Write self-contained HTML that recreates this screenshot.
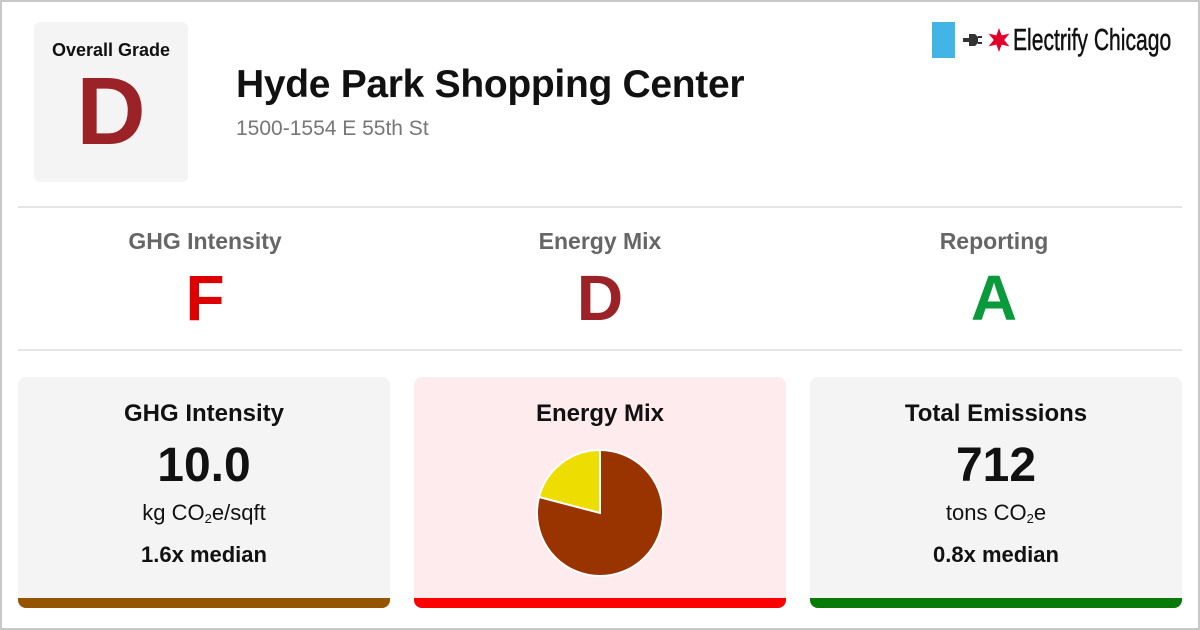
<!DOCTYPE html>
<html><head><style>
*{margin:0;padding:0;box-sizing:border-box}
body{width:1200px;height:630px;background:#fff;font-family:"Liberation Sans",Arial,sans-serif;position:relative;overflow:hidden}
.frame{position:absolute;left:0;top:0;width:1200px;height:630px;border:2px solid #c8c8c8}
.gbox{position:absolute;left:34px;top:22px;width:154px;height:160px;background:#f4f4f4;border-radius:6px;text-align:center}
.gbox .t{font-weight:bold;font-size:18px;margin-top:18px;color:#111}
.gbox .g{font-weight:bold;font-size:96px;color:#9b2226;line-height:100px;margin-top:1px}
h1{position:absolute;left:236px;top:63px;font-size:39px;font-weight:bold;color:#111;letter-spacing:-0.3px}
.addr{position:absolute;left:236px;top:117px;font-size:21px;color:#777}
.logo{position:absolute;left:932px;top:22px;height:36px;display:flex;align-items:center;white-space:nowrap}
.logo .sq{width:23px;height:36px;background:#41b6e6;flex:none}
.logo .txt{font-size:31px;color:#111;margin-left:2px;transform:scaleX(.68);transform-origin:left;white-space:nowrap;-webkit-text-stroke:0.5px #111}
.hr{position:absolute;left:18px;width:1164px;height:2px;background:#e6e6e6}
.col{position:absolute;top:228px;width:300px;text-align:center}
.col .l{font-size:23px;font-weight:bold;color:#666}
.col .v{font-size:64px;font-weight:bold;line-height:70px;margin-top:8px}
.card{position:absolute;top:377px;width:372px;height:231px;border-radius:8px;background:#f4f4f4;text-align:center;overflow:hidden}
.card .h{font-size:24px;font-weight:bold;color:#111;margin-top:23px}
.card .n{font-size:48px;font-weight:bold;color:#111;margin-top:12px;line-height:52px}
.card .u{font-size:22px;color:#111;margin-top:8px}
.card .m{font-size:22px;font-weight:bold;color:#111;margin-top:16px}
.card .bar{position:absolute;left:0;bottom:0;width:100%;height:10px}
sub{font-size:13px;vertical-align:-3px}
</style></head><body>
<div class="frame"></div>
<div class="gbox"><div class="t">Overall Grade</div><div class="g">D</div></div>
<h1>Hyde Park Shopping Center</h1>
<div class="addr">1500-1554 E 55th St</div>
<div class="logo"><div class="sq"></div>
<svg width="56" height="36" viewBox="0 0 56 36" style="flex:none"><rect x="8" y="16" width="6" height="4" fill="#333"/><path d="M14 12h6l3 3v6l-3 3h-6z" fill="#333"/><rect x="23" y="14" width="4" height="2" fill="#333"/><rect x="23" y="20" width="4" height="2" fill="#333"/><path d="M44 6l2.6 7.4 7.8-1.8-5.2 6.4 5.2 6.4-7.8-1.8L44 30l-2.6-7.4-7.8 1.8 5.2-6.4-5.2-6.4 7.8 1.8z" fill="#e4002b"/></svg>
<div class="txt">Electrify Chicago</div></div>
<div class="hr" style="top:206px"></div>
<div class="hr" style="top:349px"></div>
<div class="col" style="left:55px"><div class="l">GHG Intensity</div><div class="v" style="color:#d00">F</div></div>
<div class="col" style="left:450px"><div class="l">Energy Mix</div><div class="v" style="color:#9b2226">D</div></div>
<div class="col" style="left:844px"><div class="l">Reporting</div><div class="v" style="color:#0a9a3c">A</div></div>
<div class="card" style="left:18px"><div class="h">GHG Intensity</div><div class="n">10.0</div><div class="u">kg CO<sub>2</sub>e/sqft</div><div class="m">1.6x median</div><div class="bar" style="background:#955500"></div></div>
<div class="card" style="left:414px;background:#fdebee"><div class="h">Energy Mix</div>
<svg width="132" height="132" viewBox="-66 -66 132 132" style="margin-top:19px"><circle r="63" fill="#993300" stroke="#fff" stroke-width="2"/><path d="M0 0L0 -63A63 63 0 0 0 -61 -16Z" fill="#eedd00" stroke="#fff" stroke-width="2"/></svg>
<div class="bar" style="background:#f00"></div></div>
<div class="card" style="left:810px"><div class="h">Total Emissions</div><div class="n">712</div><div class="u">tons CO<sub>2</sub>e</div><div class="m">0.8x median</div><div class="bar" style="background:#087a08"></div></div>
</body></html>
